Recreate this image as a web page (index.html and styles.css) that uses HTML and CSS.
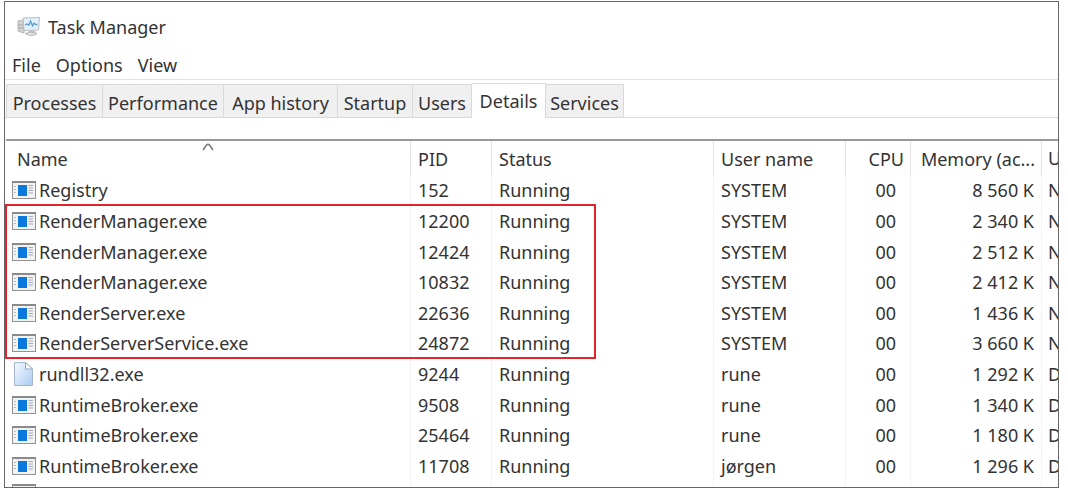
FILE: index.html
```html
<!DOCTYPE html>
<html lang="en">
<head>
<meta charset="utf-8">
<title>Task Manager</title>
<link rel="stylesheet" href="styles.css">
<script src="app.js" defer></script>
</head>
<body>
<svg class="defs" aria-hidden="true">
  <symbol id="exe" viewBox="0 0 24 18">
    <rect x="0.5" y="0.5" width="23" height="17" fill="#f3f3f3" stroke="#929292"/>
    <path d="M0 1H24" stroke="#8a8a8a" stroke-width="2"/>
    <path d="M2 5.500h2M2 8.500h2M2 11.500h2" stroke="#b5bcc6"/>
    <rect x="6" y="4" width="9" height="11" fill="#0a78dc"/>
    <path d="M16.500 4.500h4.500M16.500 7h4.500M16.500 9.500h4.500M16.500 12h4.500" stroke="#a3abb7"/>
  </symbol>
  <symbol id="page" viewBox="0 0 24 24">
    <defs><linearGradient id="paper" x1="0" y1="0" x2="1" y2="1"><stop offset="0" stop-color="#f6faff"/><stop offset="1" stop-color="#a9cbf0"/></linearGradient></defs>
    <path d="M2.500 .5H13.500L20.500 7V23.500H2.500Z" fill="url(#paper)" stroke="#a3b6ce"/>
    <path d="M13.500 .5V7H20.500Z" fill="#fff" stroke="#8fa6c4"/>
  </symbol>
</svg>
<main class="window">
  <header class="titlebar">
    <svg class="app-icon" viewBox="0 0 24 20" aria-hidden="true">
      <path d="M1 4l6-1v13l-6-2z" fill="#d4d4d2" stroke="#b5b5b3"/>
      <path d="M1 8h5M1 11h5" stroke="#a5a5a5"/>
      <path d="M6 1L22.500 0.500L21.500 13L7 13.500Z" fill="#e2f2fc" stroke="#b9bdc0"/>
      <path d="M8 8l2-1 2 1 1.500-4 2 5 1.500-3 1.500 1.500h2" fill="none" stroke="#5a9ccb" stroke-width="1.300"/>
      <path d="M12 13.500h6l1 3H11z" fill="#c4c4c4"/>
      <path d="M8 16.500q6-3 12 0q-5 4-12 0z" fill="#e4e4e4" stroke="#b5b5b5"/>
    </svg>
    <h1 class="title">Task Manager</h1>
  </header>
  <nav class="menu">
    <button type="button">File</button>
    <button type="button">Options</button>
    <button type="button">View</button>
  </nav>
  <div class="tabs" role="tablist">
    <button type="button" role="tab" class="tab tab-processes">Processes</button>
    <button type="button" role="tab" class="tab tab-performance">Performance</button>
    <button type="button" role="tab" class="tab tab-history">App history</button>
    <button type="button" role="tab" class="tab tab-startup">Startup</button>
    <button type="button" role="tab" class="tab tab-users">Users</button>
    <button type="button" role="tab" class="tab tab-details" aria-selected="true">Details</button>
    <button type="button" role="tab" class="tab tab-services">Services</button>
  </div>
  <section class="list">
    <table class="processes">
      <colgroup><col class="c-name"><col class="c-pid"><col class="c-status"><col class="c-user"><col class="c-cpu"><col class="c-memory"><col></colgroup>
      <thead>
        <tr>
          <th class="name" aria-sort="ascending">Name<svg class="sort" viewBox="0 0 12 8" aria-hidden="true"><path d="M1 7L4.500 2Q6 0.500 7.500 2L11 7" fill="none" stroke="#777" stroke-width="1.500"/></svg></th>
          <th>PID</th><th>Status</th><th>User name</th><th class="num">CPU</th><th class="num">Memory (ac...</th><th>U</th>
        </tr>
      </thead>
      <tbody id="before"></tbody>
      <tbody id="marked" class="marked"></tbody>
      <tbody id="after"></tbody>
    </table>
  </section>
</main>
</body>
</html>
```
FILE: app.js
```js
const groups = {
  before: [["exe", "Registry", "152", "SYSTEM", "8 560 K", "N"]],
  marked: [
    ["exe", "RenderManager.exe", "12200", "SYSTEM", "2 340 K", "N"],
    ["exe", "RenderManager.exe", "12424", "SYSTEM", "2 512 K", "N"],
    ["exe", "RenderManager.exe", "10832", "SYSTEM", "2 412 K", "N"],
    ["exe", "RenderServer.exe", "22636", "SYSTEM", "1 436 K", "N"],
    ["exe", "RenderServerService.exe", "24872", "SYSTEM", "3 660 K", "N"]
  ],
  after: [
    ["page", "rundll32.exe", "9244", "rune", "1 292 K", "D"],
    ["exe", "RuntimeBroker.exe", "9508", "rune", "1 340 K", "D"],
    ["exe", "RuntimeBroker.exe", "25464", "rune", "1 180 K", "D"],
    ["exe", "RuntimeBroker.exe", "11708", "jørgen", "1 296 K", "D"],
    ["exe", "", "", "", "", ""]
  ]
};

for (const [id, rows] of Object.entries(groups)) {
  document.getElementById(id).innerHTML = rows.map(([icon, name, pid, user, memory, uac]) => `
    <tr class="${name ? "" : "partial"}">
      <td class="name"><span class="process"><svg class="${icon}"><use href="#${icon}"/></svg>${name}</span></td>
      <td>${pid}</td><td>${pid && "Running"}</td><td>${user}</td>
      <td class="num cpu">${pid && "00"}</td><td class="num">${memory}</td><td>${uac}</td>
    </tr>`).join("");
}
```
FILE: styles.css
```css
* { box-sizing: border-box; }

body {
  margin: 0;
  height: 100vh;
  padding: 1px 9px 4px 4px;
  background: #fff;
  color: #333;
  font: 18px/24px "Noto Sans", "Open Sans", sans-serif;
}

button {
  font: inherit;
  color: inherit;
  border: 0;
  padding: 0;
  background: none;
}

.defs { position: absolute; width: 0; height: 0; }

.window {
  height: 100%;
  display: flex;
  flex-direction: column;
  overflow: hidden;
  border: 1px solid #666;
}

.titlebar {
  display: flex;
  align-items: center;
  gap: 7px;
  height: 50px;
  padding-left: 12px;
}

.app-icon { width: 24px; height: 20px; }

.title { margin: 0; font-size: 18px; font-weight: 400; }

.menu {
  display: flex;
  align-items: center;
  gap: 15px;
  height: 28px;
  padding-left: 7px;
  border-bottom: 1px solid #e4e4e4;
}

.menu button { height: 26px; padding-bottom: 2px; }

.tabs {
  display: flex;
  align-items: flex-end;
  height: 38px;
  padding-left: 1px;
  border-bottom: 1px solid #d9d9d9;
}

.tab {
  height: 33px;
  padding-top: 4px;
  border: 1px solid #d9d9d9;
  border-bottom: 0;
  border-left: 0;
  background: #f0f0f0;
  white-space: nowrap;
}

.tab:first-child { border-left: 1px solid #d9d9d9; }
.tab-processes { width: 97px; }
.tab-performance { width: 121px; }
.tab-history { width: 114px; }
.tab-startup { width: 75px; }
.tab-users { width: 59px; }
.tab-details { width: 74px; }
.tab-services { width: 78px; }

.tab[aria-selected="true"] {
  height: 35px;
  margin-bottom: -1px;
  padding: 0;
  background: #fff;
}

.list {
  flex: 1;
  min-height: 0;
  margin: 21px 0 0 1px;
  border-top: 2px solid #999;
}

.processes {
  width: 100%;
  height: 371px;
  table-layout: fixed;
  border-collapse: separate;
  border-spacing: 0;
}

.c-name { width: 405px; }
.c-pid { width: 81px; }
.c-status { width: 222px; }
.c-user { width: 132px; }
.c-cpu { width: 65px; }
.c-memory { width: 131px; }

th, td {
  padding: 0 7px;
  border-right: 1px solid #f3f3f3;
  font-weight: 400;
  text-align: left;
  white-space: nowrap;
  overflow: hidden;
}

th { height: 34px; padding-top: 2px; border-color: #e2e2e2; }
th.name { position: relative; padding-left: 11px; }
td.name { padding-left: 6px; }
th.num { padding-right: 6px; }
.num { text-align: right; }
td.cpu { padding-right: 14px; }
th:last-child, td:last-child { padding: 0 0 0 6px; border-right: 0; }
.partial td { vertical-align: top; }

.sort {
  position: absolute;
  top: 2px;
  left: calc(50% - 6px);
  width: 12px;
  height: 8px;
}

.process { display: flex; align-items: center; gap: 3px; min-height: 24px; }
.exe { width: 24px; height: 18px; }
.page { width: 24px; height: 24px; }

.marked { position: relative; }

.marked::after {
  content: "";
  position: absolute;
  top: -2px;
  bottom: 0;
  left: -1px;
  width: 587px;
  border: 2px solid #e3242b;
}
```
